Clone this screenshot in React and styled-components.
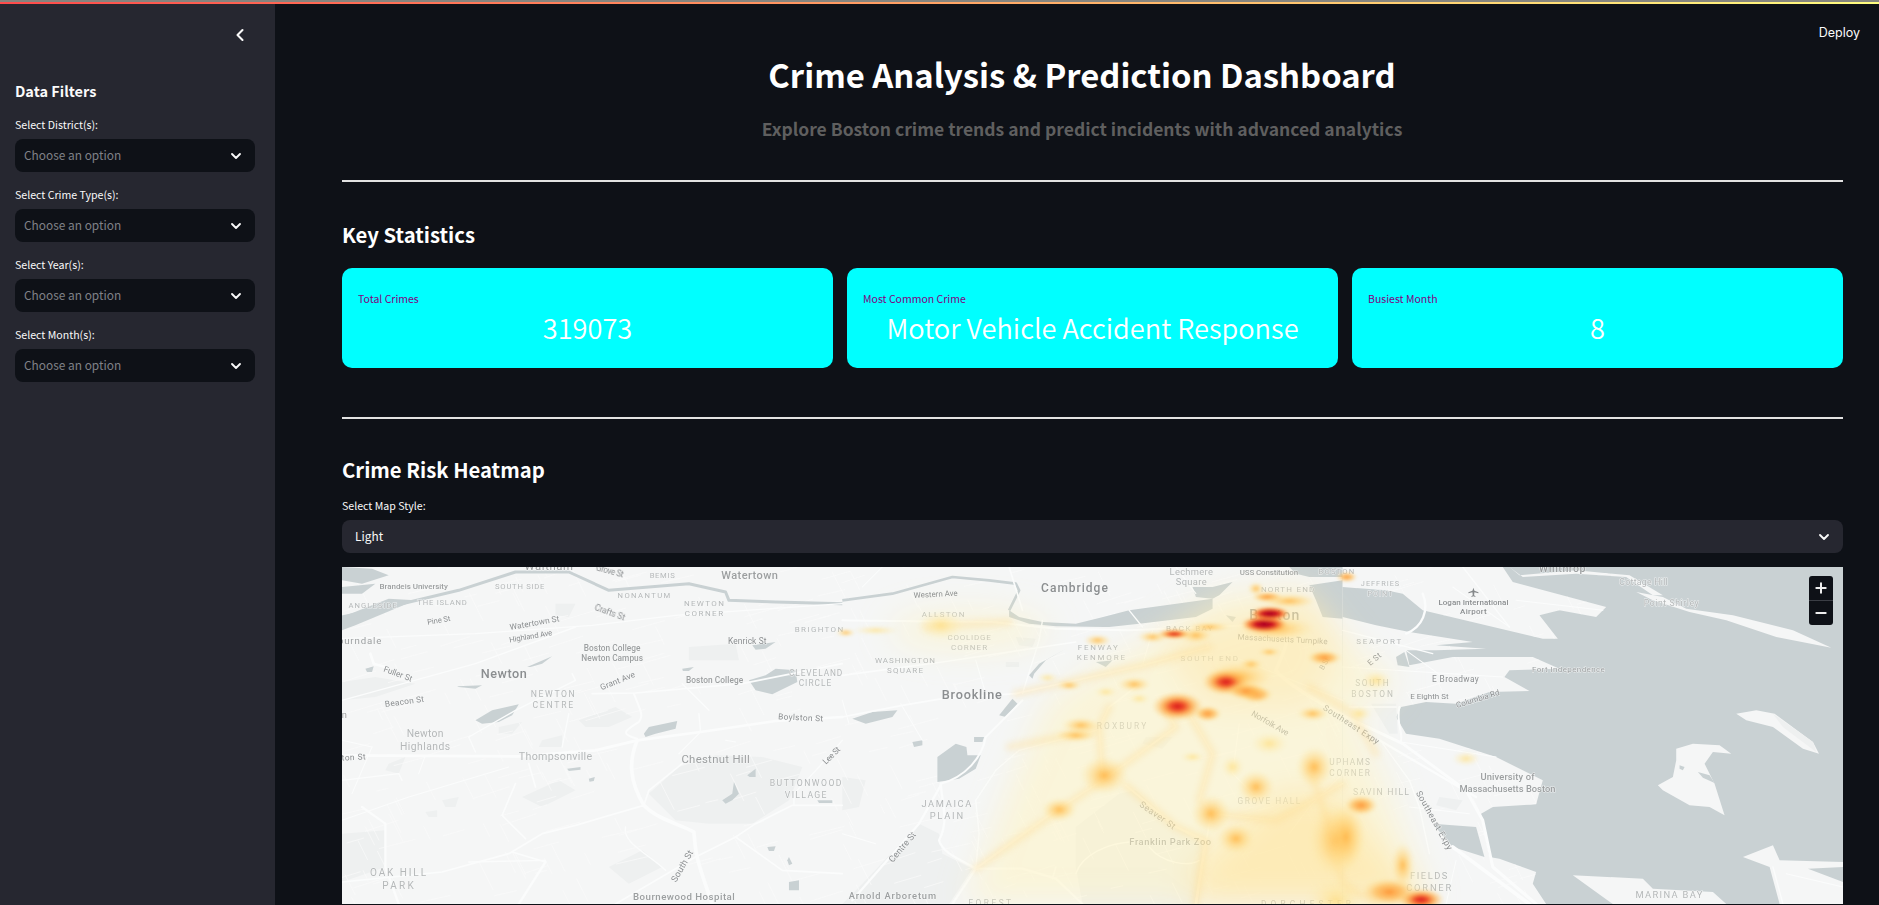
import React from "react";
import styled, { createGlobalStyle } from "styled-components";
import { ChevronDown, ChevronLeft, Plus, Minus } from "lucide-react";

const UI_FONT = `"Noto Sans CJK SC", "Noto Sans", sans-serif`;

const Global = createGlobalStyle`
  html, body { margin: 0; padding: 0; height: 100%; overflow: hidden; background: #0e1117; }
  #root { height: 100%; }
  * { box-sizing: border-box; }
`;

const Page = styled.div`
  display: flex; flex-direction: column; height: 905px; overflow: hidden;
  background: #0e1117; color: #fafafa; font-family: ${UI_FONT};
`;
const Stripe = styled.div`
  flex: none; height: 4px; border-top: 2px solid #85857f;
  background: linear-gradient(90deg, #ff4b4b, #fffd80);
`;
const Shell = styled.div`flex: 1; display: flex; min-height: 0;`;
const Sidebar = styled.aside`
  flex: none; width: 275px; background: #262730; padding: 21px 20px 0 15px;
  display: flex; flex-direction: column;
`;
const CollapseRow = styled.div`
  display: flex; justify-content: flex-end; height: 20px; margin-bottom: 36px; padding-right: 5px;
  color: #fafafa;
`;
const SideHeading = styled.h3`
  margin: 0 0 16px; font-size: 14.5px; line-height: 20px; font-weight: 700; color: #fafafa;
`;
const Field = styled.div`margin-bottom: 15px;`;
const FieldLabel = styled.label`
  display: block; font-size: 10.6px; line-height: 16px; height: 16px; margin-bottom: 6px; color: #fafafa;
`;
const SelectBox = styled.div`
  display: flex; align-items: center; justify-content: space-between;
  height: 33px; border-radius: 8px; padding: 0 11px 0 ${p => p.$pad || 9}px;
  background: ${p => p.$bg}; color: ${p => p.$fg};
  font-size: 11.9px; line-height: 20px;
`;
const SelectText = styled.span`margin-top: -2px;`;
const Main = styled.main`flex: 1; min-width: 0; display: flex; flex-direction: column;`;
const TopBar = styled.div`
  flex: none; height: 36px; padding: 21px 19px 0 0; display: flex; justify-content: flex-end;
`;
const Deploy = styled.span`
  font-family: Inter, sans-serif; font-size: 12.5px; line-height: 16px; color: #fafafa;
`;
const Content = styled.div`flex: 1; min-height: 0; padding: 0 36px 0 67px; display: flex; flex-direction: column;`;
const Hero = styled.header`padding: 12px 21px 0 0; text-align: center;`;
const Title = styled.h1`
  margin: 0; font-size: 32.8px; line-height: 44px; font-weight: 700; color: #fff;
`;
const Subtitle = styled.p`
  margin: 19px 0 0; font-size: 17.5px; line-height: 28px; font-weight: 700; color: #5f5f5f;
`;
const Rule = styled.hr`
  flex: none; width: 100%; height: 2px; margin: ${p => p.$top}px 0 0; border: 0; background: #e2e2e2;
`;
const SectionTitle = styled.h2`
  margin: ${p => p.$top}px 0 0; font-size: 20.3px; line-height: 32px; font-weight: 700; color: #fff;
`;
const Cards = styled.div`
  display: grid; grid-template-columns: repeat(3, 1fr); gap: 14px; margin-top: 18px;
`;
const Card = styled.div`
  height: 100px; border-radius: 10px; background: #00ffff; padding: 23px 16px 0;
`;
const CardLabel = styled.div`font-size: 10.5px; line-height: 16px; color: #800080;`;
const CardValue = styled.div`
  margin-top: 0; text-align: center; font-size: 27.2px; line-height: 40px; font-weight: 350; color: #fff;
`;
const MapLabelRow = styled(FieldLabel)`margin: 13px 0 6px;`;
const MapFrame = styled.div`
  position: relative; flex: none; height: 337px; margin-top: 14px; overflow: hidden; background: #f5f6f6;
`;
const MapSvg = styled.svg`display: block; width: 100%; height: 100%;`;
const ZoomStack = styled.div`
  position: absolute; top: 9px; right: 10px; width: 24px; height: 49px; border-radius: 3px;
  background: #0e1117; display: flex; flex-direction: column; color: #eee;
`;
const ZoomButton = styled.div`
  flex: 1; display: flex; align-items: center; justify-content: center;
  & + & { border-top: 1px solid #3b3e45; }
`;
const Place = styled.text`
  font-family: Roboto, "Liberation Sans", sans-serif;
  font-size: ${p => p.$s}px;
  font-weight: ${p => (p.$b ? 500 : 400)};
  fill: ${p => p.$c};
  stroke: #f6f7f7; stroke-width: 3px; paint-order: stroke; stroke-opacity: .8;
  text-anchor: middle; dominant-baseline: central;
`;

const DARK = "#8b8e90", MID = "#9c9fa0", LIGHT = "#b5b8b9";

/* [text, cx, cy, width, size, colour, rotation, bold] — map coordinates are 3x page pixels */
const labels1 = [
  ["Waltham", 620, -2, 145, 34, MID], ["Grove St", 803, 12, 85, 25, DARK, 15], ["BEMIS", 960, 27, 75, 23, LIGHT],
  ["Watertown", 1222, 27, 170, 33, MID, 0, 1], ["Brandeis University", 215, 60, 205, 24, MID, 0, 1],
  ["SOUTH SIDE", 533, 60, 148, 23, LIGHT], ["NONANTUM", 905, 85, 158, 23, LIGHT], ["ANGLESIDE", 92, 116, 145, 23, LIGHT],
  ["THE ISLAND", 300, 106, 148, 23, LIGHT], ["NEWTON", 1085, 109, 120, 24, LIGHT], ["CORNER", 1085, 139, 115, 24, LIGHT],
  ["Crafts St", 803, 136, 95, 25, DARK, 20], ["Pine St", 290, 160, 70, 23, DARK, -10], ["Watertown St", 577, 167, 150, 25, DARK, -10],
  ["Highland Ave", 566, 208, 130, 23, DARK, -10], ["BRIGHTON", 1430, 188, 145, 24, LIGHT], ["Kenrick St", 1215, 221, 115, 25, DARK],
  ["Boston College", 810, 242, 170, 25, MID, 0, 1], ["Newton Campus", 810, 274, 185, 25, MID, 0, 1], ["Auburndale", 33, 222, 170, 29, MID],
  ["Fuller St", 168, 320, 90, 25, DARK, 20], ["Newton", 485, 321, 138, 38, DARK, 0, 1], ["Grant Ave", 826, 341, 110, 25, DARK, -22],
  ["Boston College", 1117, 338, 172, 25, MID, 0, 1], ["CLEVELAND", 1420, 317, 160, 25, LIGHT], ["CIRCLE", 1418, 348, 98, 25, LIGHT],
  ["NEWTON", 632, 380, 132, 26, LIGHT], ["CENTRE", 632, 413, 122, 26, LIGHT], ["Beacon St", 187, 403, 118, 25, DARK, -8],
  ["Boylston St", 1375, 451, 135, 25, DARK, 3], ["Newton", 249, 500, 110, 31, LIGHT], ["Highlands", 249, 538, 150, 31, LIGHT],
  ["n", 7, 443, 14, 28, MID], ["ton St", 35, 570, 72, 25, DARK, -3], ["Thompsonville", 640, 570, 220, 32, LIGHT],
  ["Chestnut Hill", 1120, 575, 205, 34, MID], ["Lee St", 1467, 565, 62, 25, DARK, -45], ["BUTTONWOOD", 1390, 649, 215, 26, LIGHT],
  ["VILLAGE", 1390, 683, 125, 26, LIGHT], ["South St", 1020, 897, 105, 27, DARK, -60], ["OAK HILL", 168, 917, 168, 30, LIGHT],
  ["PARK", 168, 957, 95, 30, LIGHT], ["Bournewood Hospital", 1025, 990, 305, 29, MID, 0, 1],
];
const labels2 = [
  ["Western Ave", 280, 82, 132, 24, DARK, -3], ["ALLSTON", 302, 142, 128, 24, LIGHT], ["Cambridge", 696, 64, 200, 36, DARK, 0, 1],
  ["Lechmere", 1046, 13, 130, 28, LIGHT], ["Square", 1046, 44, 93, 28, LIGHT], ["USS Constitution", 1279, 16, 175, 24, MID, 0, 1],
  ["BOSTON", 1481, 14, 107, 23, LIGHT], ["NORTH END", 1335, 67, 160, 24, LIGHT], ["Boston", 1295, 143, 150, 42, DARK, 0, 1],
  ["BACK BAY", 1040, 184, 140, 24, LIGHT], ["Massachusetts Turnpike", 1320, 217, 270, 24, DARK, 3], ["COOLIDGE", 380, 213, 130, 24, LIGHT],
  ["CORNER", 380, 243, 108, 24, LIGHT], ["FENWAY", 766, 241, 120, 24, LIGHT], ["KENMORE", 775, 271, 145, 24, LIGHT],
  ["WASHINGTON", 188, 280, 180, 24, LIGHT], ["SQUARE", 188, 311, 108, 24, LIGHT], ["SOUTH END", 1100, 275, 172, 24, LIGHT],
  ["Brookline", 388, 384, 180, 38, DARK, 0, 1], ["ROXBURY", 837, 476, 148, 25, LIGHT], ["Norfolk Ave", 1283, 468, 125, 25, DARK, 30],
  ["JAMAICA", 312, 709, 150, 28, LIGHT], ["PLAIN", 312, 745, 100, 28, LIGHT], ["GROVE HALL", 1279, 701, 188, 25, LIGHT],
  ["Seaver St", 945, 745, 125, 27, DARK, 35], ["Franklin Park Zoo", 983, 824, 245, 28, MID, 0, 1], ["Centre St", 180, 840, 110, 27, DARK, -50],
  ["Arnold Arboretum", 150, 987, 262, 28, MID, 0, 1], ["FOREST", 442, 1008, 128, 25, LIGHT], ["DORCHESTER", 1390, 1012, 270, 25, LIGHT],
  ["UPHAMS", 1521, 584, 122, 25, LIGHT], ["CORNER", 1521, 617, 122, 25, LIGHT], ["B St", 1445, 290, 38, 22, DARK, -60],
];
const labels3 = [
  ["Winthrop", 658, 3, 140, 32, MID, 0, 1], ["JEFFRIES", 112, 51, 115, 22, LIGHT], ["POINT", 112, 79, 75, 22, LIGHT],
  ["Cottage Hill", 902, 46, 145, 26, LIGHT], ["Point Shirley", 985, 107, 165, 26, LIGHT], ["Logan International", 392, 107, 210, 24, DARK, 0, 1],
  ["Airport", 392, 134, 80, 24, DARK, 0, 1], ["SEAPORT", 108, 224, 135, 24, LIGHT], ["E St", 95, 277, 45, 24, DARK, -40],
  ["Fort Independence", 677, 307, 218, 24, MID], ["E Broadway", 338, 337, 140, 25, DARK], ["SOUTH", 88, 347, 100, 25, LIGHT],
  ["BOSTON", 88, 380, 125, 25, LIGHT], ["E Eighth St", 260, 388, 115, 24, DARK], ["Columbia Rd", 405, 396, 135, 24, DARK, -17],
  ["Southeast Expy", 26, 472, 194, 25, DARK, 33], ["University of", 494, 630, 162, 28, MID, 0, 1], ["Massachusetts Boston", 494, 666, 288, 28, MID, 0, 1],
  ["SAVIN HILL", 115, 674, 168, 26, LIGHT], ["Southeast Expy", 275, 760, 198, 26, DARK, 61], ["FIELDS", 258, 925, 112, 28, LIGHT],
  ["CORNER", 258, 962, 135, 28, LIGHT], ["MARINA BAY", 978, 983, 200, 28, LIGHT],
];

const parks = {
  p1: [
    "M920,680 L1010,600 L1120,565 L1260,570 L1380,600 L1340,700 L1230,770 L1100,770 L1000,760Z",
    "M0,345 L100,330 L220,350 L100,390 L0,400Z", "M710,460 L820,420 L870,450 L800,480 L730,480Z", "M600,520 L660,505 L660,540 L590,540Z",
    "M0,800 L130,790 L130,900 L0,945Z", "M140,590 L190,570 L170,620 L130,610Z", "M540,690 L650,640 L700,670 L600,720Z",
    "M640,110 L700,110 L680,150 L640,145Z", "M1040,240 L1180,230 L1190,280 L1040,280Z", "M470,480 L540,465 L510,500 L470,500Z",
    "M300,700 L350,690 L340,720 L310,720Z", "M250,735 L285,730 L285,750 L260,750Z", "M800,900 L900,850 L960,900 L860,950Z",
  ],
  p2: [
    "M700,900 L700,780 L830,680 L880,670 L1000,780 L1080,830 L1070,1011 L720,1011Z",
    "M60,950 L230,770 L290,800 L300,860 L390,905 L320,1011 L0,1011Z", "M0,630 L70,640 L50,720 L0,730Z",
    "M520,210 L580,215 L570,240 L530,235Z", "M910,510 L990,510 L960,545 L900,530Z", "M490,285 L530,285 L530,300 L490,300Z",
  ],
};
const water1 = [
  "M400,460 L450,430 L530,412 L510,445 L470,465 L420,470Z", "M905,500 L920,480 L1005,462 L1000,485 L940,500 L910,510Z",
  "M1220,340 L1270,325 L1300,305 L1360,310 L1365,345 L1290,382 L1240,370Z", "M555,300 L630,268 L600,290 L565,300Z",
  "M0,0 L90,5 L140,25 L60,50 L0,40Z", "M0,60 L100,50 L60,80 L0,80Z", "M1230,235 L1300,225 L1270,245 L1240,248Z",
  "M1020,305 L1055,300 L1040,312 L1022,312Z", "M70,305 L95,298 L90,315 L75,315Z", "M345,358 L420,355 L400,365 L350,360Z",
  "M1140,700 L1170,680 L1175,645 L1190,680 L1170,700 L1150,710Z", "M1215,625 L1240,605 L1240,630 L1222,630Z",
  "M1340,870 L1350,890 L1340,895 L1335,880Z", "M1340,945 L1370,940 L1370,970 L1340,970Z", "M1275,840 L1300,838 L1295,852 L1280,852Z",
  "M675,605 L715,600 L715,608 L680,612Z", "M740,635 L758,630 L755,642 L742,644Z", "M1425,700 L1470,700 L1470,708 L1430,708Z",
];
const water2 = [
  "M500,130 L530,150 L600,165 L700,170 L860,130 L1110,95 L1110,125 L1060,150 L890,170 L800,180 L640,178 L560,170 L500,150Z",
  "M1050,60 L1110,60 L1170,45 L1130,85 L1110,95 L1060,90Z", "M1400,55 L1500,40 L1500,155 L1440,150 L1420,100Z",
  "M1340,0 L1500,0 L1500,30 L1400,30 L1360,20Z", "M30,455 L90,435 L165,430 L150,450 L70,470Z",
  "M285,570 L340,530 L372,540 L375,565 L415,565 L400,605 L350,635 L285,645Z", "M470,445 L510,395 L525,410 L490,450Z",
  "M395,510 L425,510 L420,525 L395,525Z", "M210,525 L240,520 L240,535 L215,540Z", "M560,325 L590,290 L670,245 L610,280 L575,320 L570,335Z",
  "M760,285 L810,280 L790,300Z", "M1150,145 L1180,150 L1170,165Z",
];
const land3 = [
  "M0,0 L260,0 L180,80 L130,70 L0,60Z",
  "M190,40 L255,0 L480,0 L510,45 L790,120 L760,150 L650,130 L590,145 L645,215 L600,215 L240,130 L180,80Z",
  "M500,0 L530,25 L700,10 L860,25 L960,85 L930,85 L850,30 L700,20 L540,30Z",
  "M880,75 L960,90 L1030,125 L1170,145 L1350,190 L1465,242 L1300,210 L1150,160 L1040,135 L930,100Z",
  "M0,150 L100,175 L200,195 L390,225 L280,235 L430,245 L280,250 L190,250 L200,295 L330,270 L570,270 L650,305 L500,310 L485,330 L560,372 L440,375 L340,410 L250,405 L175,420 L160,450 L190,500 L290,515 L460,570 L600,640 L580,712 L450,720 L415,740 L440,870 L470,875 L580,915 L570,950 L610,1011 L0,1011Z",
  "M1180,440 L1240,430 L1295,440 L1410,525 L1428,560 L1380,545 L1290,480 L1210,460Z",
  "M1000,545 L1050,530 L1130,535 L1165,560 L1110,555 L1085,590 L1115,650 L1145,745 L1100,720 L1040,715 L960,670 L945,655 L990,630 L1000,580Z",
  "M690,925 L900,935 L930,965 L1110,975 L1150,1011 L810,1011Z",
  "M1200,870 L1290,835 L1310,880 L1500,885 L1500,900 L1395,905 L1500,945 L1500,1011 L1310,1011 L1280,900Z",
];
const water3 = ["M270,770 L400,780 L425,870 L330,840Z", "M1010,595 L1025,600 L1020,610 L1010,605Z", "M1065,615 L1100,625 L1115,648 L1080,632Z", "M160,270 L185,255 L200,300 L165,295Z"];

const riverA = "M0,150 L180,110 L350,70 L520,15 L680,15 L800,70 L1040,50 L1150,75 L1160,100 L1300,105 L1500,110";
const riverB = "M0,100 L150,80 L330,30 L440,40 L520,50 L530,70 L500,130";

const roads1 = [
  ["M0,565 L530,568 L760,550 L885,520 L1075,495 L1300,462 L1500,450", 8], ["M885,520 C860,580 860,640 905,715 C950,760 1010,770 1055,795 C1060,860 1060,870 1110,1011", 11],
  ["M905,715 L700,775 L600,800 L500,860 L300,915 L0,945", 5], ["M1500,715 L1350,715 L1240,770 L1180,810 L1060,870 L820,1011", 5],
  ["M1180,810 L1320,910 L1500,920", 5], ["M520,650 L480,745 L550,815", 5], ["M60,720 L130,770 L130,900 L170,1011", 7], ["M610,885 L530,1011", 7],
  ["M380,885 L610,880", 4], ["M510,855 L610,885", 5], ["M875,380 C895,430 905,445 890,465 C850,490 830,500 885,515", 6], ["M0,400 L400,290 L700,180", 4],
  ["M0,215 L400,200 L750,175 L1000,145 L1500,110", 4], ["M750,380 L880,378 L1200,350 L1500,290", 5], ["M700,340 L520,430 L380,510 L400,555", 4], ["M560,590 L580,660", 5],
  ["M1020,590 L920,670 L905,715", 5], ["M1070,440 L1075,495 L1010,560", 4], ["M1100,430 L1020,350", 4], ["M1500,520 L1430,600 L1355,680 L1355,715", 4],
  ["M0,640 L170,620 L180,640", 4], ["M0,760 L200,690 L500,600", 3], ["M90,540 L30,680", 3], ["M85,260 L95,290 L130,300", 8], ["M690,320 L700,340", 4],
  ["M850,780 C840,830 920,860 970,910", 4], ["M680,440 L660,540", 4], ["M0,520 L90,540", 3], ["M230,620 L250,565", 3], ["M1150,520 L1180,525", 3],
];
const roads2 = [
  ["M0,450 L180,415 L300,395 L520,380", 5], ["M520,380 L700,340 L900,295 L1100,240", 5], ["M0,325 L300,285 L700,225", 5], ["M600,160 L590,220 L540,380", 4],
  ["M0,160 L450,165 L640,185 L860,190 L1100,180 L1320,170", 6], ["M295,650 C370,630 420,570 430,510 L540,400", 6],
  ["M295,650 C300,720 320,760 290,820 C300,860 360,880 400,905 L540,905 L640,935 L720,1011", 7], ["M400,905 L330,1011", 7], ["M30,1000 L230,770 L295,655", 7],
  ["M400,905 L410,800 L400,700 L460,610 L530,550 L760,490", 4], ["M640,730 L400,905", 6], ["M780,640 L640,730", 5], ["M780,640 L770,480 L800,420 L880,360", 5],
  ["M780,640 L1000,480 L970,430", 5], ["M850,655 L1000,780 L1090,820", 6], ["M1090,820 L1060,1011", 8], ["M1105,740 L1090,830", 5], ["M1105,740 L1300,760 L1500,650", 4],
  ["M640,900 L630,935", 5], ["M700,920 C720,860 800,830 860,825", 4], ["M920,840 C960,890 1040,900 1070,880", 4], ["M1300,310 L1325,250 L1345,180", 11],
  ["M1300,310 C1330,350 1420,400 1500,445", 11], ["M1040,440 L1110,560 L1070,700", 3], ["M1190,470 L1170,620 L1230,680", 3], ["M1500,620 L1400,720 L1340,800", 3],
  ["M0,800 L100,830", 3], ["M175,410 L240,520", 3], ["M400,280 L430,380", 3], ["M0,400 L20,470", 3], ["M930,190 L900,295", 3], ["M1150,260 L1500,400", 3],
  ["M120,0 L60,60", 3], ["M860,130 L900,180", 4], ["M500,0 L540,130", 5], ["M1000,0 L1060,80", 3],
];
const roads3 = [
  ["M0,445 L180,530 L370,670 L420,760 L450,900 L580,1011", 9], ["M110,520 L400,690", 7], ["M330,840 L560,1011", 11], ["M240,80 C260,130 240,180 190,200", 7],
  ["M170,420 C160,470 180,490 175,520", 6], ["M175,525 L460,570", 3], ["M0,190 L270,260", 4], ["M20,420 L160,420", 5], ["M120,530 L200,640 L230,720 L260,860", 4],
  ["M0,300 L480,330", 3], ["M190,250 L300,330", 3], ["M330,60 L500,180", 3], ["M360,0 L500,180", 4], ["M520,100 L780,130", 3], ["M340,880 L310,1011", 3], ["M200,720 L380,740", 3],
  ["M1290,900 L1320,1011", 4], ["M1330,920 L1500,960", 3],
];

function makeMesh(width, count) {
  let seed = 7;
  const r = () => (seed = (seed * 16807) % 2147483647) / 2147483647;
  let d = "";
  for (let i = 0; i < count; i++) {
    const x = r() * width, y = r() * 1011;
    const len = 30 + r() * 90;
    if (r() < 0.6) d += `M${x.toFixed(0)},${y.toFixed(0)} l${len.toFixed(0)},${(-len * (0.22 + r() * 0.12)).toFixed(0)} `;
    else d += `M${x.toFixed(0)},${y.toFixed(0)} l${(len * 0.35).toFixed(0)},${(len * 0.7).toFixed(0)} `;
  }
  return d;
}
const meshPath = makeMesh(3000, 520);
const meshPath3 = makeMesh(800, 140);

/* heat spots in whole-map coordinates: [x, y, rx, ry, gradient] */
const P2 = 1500, P3 = 3000;
const heatSpots = [
  [P2 + 295, 175, 70, 45, "w"], [P2 + 10, 197, 30, 12, "o"], [P2 + 100, 190, 70, 14, "w"], [P2 + 615, 332, 32, 15, "w"], [P2 + 890, 395, 32, 16, "w"],
  [P2 + 1095, 440, 42, 24, "m"], [P2 + 1050, 570, 36, 16, "w"], [P2 + 1280, 530, 55, 34, "w"], [P2 + 1170, 600, 34, 34, "w"], [P2 + 790, 375, 34, 16, "w"],
  [P3 + 50, 440, 36, 24, "w"], [P3 + 370, 575, 42, 22, "w"], [P3 + 100, 340, 46, 30, "w"], [P2 + 1240, 660, 56, 50, "o"], [P3 - 20, 1000, 90, 70, "w"],
  [P2 + 785, 625, 74, 58, "o"], [P2 + 650, 728, 54, 36, "o"], [P2 + 1105, 740, 60, 58, "o"], [P2 + 1415, 600, 56, 62, "o"], [P2 + 1240, 382, 50, 26, "m"],
  [P2 + 1225, 292, 36, 18, "o"], [P2 + 1445, 272, 52, 22, "m"], [P2 + 1410, 440, 48, 22, "o"], [P2 + 875, 352, 50, 22, "o"], [P2 + 715, 475, 58, 24, "o"],
  [P2 + 700, 505, 64, 20, "o"], [P2 + 765, 220, 42, 18, "o"], [P2 + 1280, 255, 34, 13, "o"], [P2 + 1060, 205, 50, 24, "o"], [P2 + 1100, 180, 65, 15, "o"],
  [P2 + 1275, 90, 48, 16, "m"], [P2 + 1240, 65, 25, 20, "o"], [P2 + 1340, 102, 80, 22, "o"], [P2 + 680, 355, 38, 15, "o"], [P2 + 1180, 815, 56, 46, "o"],
  [P2 + 1480, 820, 80, 110, "o"], [P3 + 55, 715, 50, 30, "m"], [P3 + 140, 975, 85, 42, "m"], [P3 + 180, 895, 36, 70, "o"], [P3 + 235, 998, 70, 34, "h"],
  [P3 + 12, 30, 32, 16, "m"], [P2 + 930, 210, 46, 18, "o"], [P2 + 1300, 185, 115, 36, "o"], [P3 + 10, 810, 60, 100, "o"], [P2 + 1190, 330, 100, 46, "o"],
  [P2 + 1005, 418, 78, 44, "h"], [P2 + 1150, 345, 72, 40, "h"], [P2 + 995, 201, 52, 16, "h"], [P2 + 1210, 372, 58, 26, "m"],
  [P2 + 1265, 172, 70, 26, "x"], [P2 + 1282, 140, 60, 22, "x"],
];
/* faint bands of heat that run along the main roads */
const heatStreaks = [
  "M2280,640 L2270,480 L2300,420", "M2280,640 L2500,480 L2470,430", "M2280,640 L2150,730 L1900,905", "M2350,655 L2500,780 L2590,820 L2560,1011",
  "M2605,740 L2800,760 L3000,650", "M2540,440 L2610,560 L2570,700", "M2900,600 L2960,780 L3000,950 L3100,1011", "M2000,540 L2260,490", "M2900,360 L3030,440 L3100,560",
  "M2020,380 L2400,295 L2600,240", "M1750,180 L2000,165",
];

function LabelGroup({ items }) {
  return items.map(([t, x, y, w, s, c, rot, b], i) => (
    <Place key={i} x={x} y={y} $s={s} $c={c} $b={b} textLength={w}
      transform={rot ? `rotate(${rot} ${x} ${y})` : undefined}>{t}</Place>
  ));
}
function RoadGroup({ items }) {
  return items.map(([d, w], i) => (
    <path key={i} d={d} fill="none" stroke="#fbfcfc" strokeWidth={w} strokeLinejoin="round" strokeLinecap="round" />
  ));
}
function Shapes({ items, fill }) {
  return items.map((d, i) => <path key={i} d={d} fill={fill} />);
}

const WATER = "#c9d1d3", LAND = "#f5f6f6", PARK = "#eef0f0";

function CrimeMap() {
  return (
    <MapSvg viewBox="0 0 4500 1011" preserveAspectRatio="none">
      <defs>
        <clipPath id="land-clip">{land3.slice(0, 5).map((d, i) => <path key={i} d={d} />)}</clipPath>
        <filter id="soft" x="-10%" y="-10%" width="120%" height="120%"><feGaussianBlur stdDeviation="1.1" /></filter>
        <filter id="wash" x="-20%" y="-20%" width="140%" height="140%"><feGaussianBlur stdDeviation="48" /></filter>
        <filter id="streak" x="-20%" y="-20%" width="140%" height="140%"><feGaussianBlur stdDeviation="9" /></filter>
        <filter id="spot" x="-20%" y="-20%" width="140%" height="140%"><feGaussianBlur stdDeviation="5" /></filter>
        <radialGradient id="heat-w">
          <stop offset="0%" stopColor="#ffdc78" stopOpacity=".7" /><stop offset="100%" stopColor="#ffeeb0" stopOpacity="0" />
        </radialGradient>
        <radialGradient id="heat-o">
          <stop offset="0%" stopColor="#ffb84c" stopOpacity=".95" /><stop offset="45%" stopColor="#ffcf70" stopOpacity=".55" /><stop offset="100%" stopColor="#ffe8a0" stopOpacity="0" />
        </radialGradient>
        <radialGradient id="heat-m">
          <stop offset="0%" stopColor="#fd9638" /><stop offset="50%" stopColor="#feb64f" stopOpacity=".7" /><stop offset="100%" stopColor="#ffe08a" stopOpacity="0" />
        </radialGradient>
        <radialGradient id="heat-h">
          <stop offset="0%" stopColor="#d8171f" /><stop offset="28%" stopColor="#f0512a" /><stop offset="55%" stopColor="#fca040" stopOpacity=".8" /><stop offset="100%" stopColor="#ffd87a" stopOpacity="0" />
        </radialGradient>
        <radialGradient id="heat-x">
          <stop offset="0%" stopColor="#a30026" /><stop offset="38%" stopColor="#d01020" /><stop offset="65%" stopColor="#f7762f" stopOpacity=".9" /><stop offset="100%" stopColor="#fec55a" stopOpacity="0" />
        </radialGradient>
      </defs>

      <g filter="url(#soft)">
        <rect width="4500" height="1011" fill={LAND} />
        <Shapes items={parks.p1} fill={PARK} />
        <g transform={`translate(${P2} 0)`}><Shapes items={parks.p2} fill={PARK} /></g>
        <path d={meshPath} fill="none" stroke="#fafbfb" strokeWidth="2" />

        <path d={riverA} fill="none" stroke={WATER} strokeWidth="9" strokeLinejoin="round" />
        <path d={riverB} transform={`translate(${P2} 0)`} fill="none" stroke={WATER} strokeWidth="8" strokeLinejoin="round" />
        <path d="M0,150 L140,95 L220,100 L40,175 L0,190Z" fill={WATER} />
        <Shapes items={water1} fill={WATER} />
        <g transform={`translate(${P2} 0)`}><Shapes items={water2} fill={WATER} /></g>

        <g transform={`translate(${P3} 0)`}>
          <rect width="1500" height="1011" fill={WATER} />
          <Shapes items={land3} fill={LAND} />
          <g clipPath="url(#land-clip)"><path d={meshPath3} fill="none" stroke="#fafbfb" strokeWidth="2" /></g>
          <Shapes items={water3} fill={WATER} />
          <path d="M85,410 L160,410 L165,500 L140,500Z" fill={PARK} />
          <path d="M290,690 L360,700 L340,730 L280,715Z" fill={PARK} />
          <path d="M1290,440 L1410,525 L1420,555 L1320,480Z" fill={PARK} />
          <RoadGroup items={roads3} />
          <path d="M392,62 l3,9 l12,5 v3 l-12,-3 l-1,9 l4,3 v2 l-6,-2 l-6,2 v-2 l4,-3 l-1,-9 l-12,3 v-3 l12,-5z" fill="#85888a" />
        </g>
        <RoadGroup items={roads1} />
        <g transform={`translate(${P2} 0)`}><RoadGroup items={roads2} /></g>
        <LabelGroup items={labels1} />
        <g transform={`translate(${P2} 0)`}><LabelGroup items={labels2} /></g>
        <g transform={`translate(${P3} 0)`}><LabelGroup items={labels3} /></g>
      </g>

      <g filter="url(#wash)">
        <path d="M1870,1011 L2020,620 L2120,400 L2300,280 L2420,220 L2620,80 L2880,60 L3030,240 L3150,330 L3150,380 L3030,420 L3130,650 L3260,1011Z" fill="#fff3bd" opacity=".5" />
        <path d="M2550,920 L2800,680 L3000,680 L3090,820 L3260,1011 L2550,1011Z" fill="#ffe49a" opacity=".55" />
        <path d="M2450,220 L2900,80 L3000,240 L2900,420 L2600,420Z" fill="#ffdf90" opacity=".3" />
        <ellipse cx="1880" cy="190" rx="240" ry="60" fill="#fff3bd" opacity=".45" />
      </g>
      <g filter="url(#streak)" fill="none" stroke="#ffd98a" strokeWidth="20" opacity=".36" strokeLinecap="round">
        {heatStreaks.map((d, i) => <path key={i} d={d} />)}
      </g>
      <g filter="url(#spot)">
        {heatSpots.map(([x, y, rx, ry, g], i) => (
          <ellipse key={i} cx={x} cy={y} rx={rx} ry={ry} fill={`url(#heat-${g})`} />
        ))}
      </g>
    </MapSvg>
  );
}

const filters = ["Select District(s):", "Select Crime Type(s):", "Select Year(s):", "Select Month(s):"];
const stats = [
  ["Total Crimes", "319073"],
  ["Most Common Crime", "Motor Vehicle Accident Response"],
  ["Busiest Month", "8"],
];

export default function App() {
  return (
    <Page>
      <Global />
      <Stripe />
      <Shell>
        <Sidebar>
          <CollapseRow><ChevronLeft size={20} strokeWidth={2.5} /></CollapseRow>
          <SideHeading>Data Filters</SideHeading>
          {filters.map(f => (
            <Field key={f}>
              <FieldLabel>{f}</FieldLabel>
              <SelectBox $bg="#0e1117" $fg="#808187">
                <SelectText>Choose an option</SelectText>
                <ChevronDown size={16} strokeWidth={2.8} color="#fafafa" />
              </SelectBox>
            </Field>
          ))}
        </Sidebar>
        <Main>
          <TopBar><Deploy>Deploy</Deploy></TopBar>
          <Content>
            <Hero>
              <Title>Crime Analysis &amp; Prediction Dashboard</Title>
              <Subtitle>Explore Boston crime trends and predict incidents with advanced analytics</Subtitle>
            </Hero>
            <Rule $top={37} />
            <SectionTitle $top={36}>Key Statistics</SectionTitle>
            <Cards>
              {stats.map(([l, v]) => (
                <Card key={l}>
                  <CardLabel>{l}</CardLabel>
                  <CardValue>{v}</CardValue>
                </Card>
              ))}
            </Cards>
            <Rule $top={49} />
            <SectionTitle $top={34}>Crime Risk Heatmap</SectionTitle>
            <MapLabelRow>Select Map Style:</MapLabelRow>
            <SelectBox $bg="#262730" $fg="#fafafa" $pad={13}>
              <SelectText>Light</SelectText>
              <ChevronDown size={16} strokeWidth={2.8} color="#fafafa" />
            </SelectBox>
            <MapFrame>
              <CrimeMap />
              <ZoomStack>
                <ZoomButton><Plus size={16} strokeWidth={3} /></ZoomButton>
                <ZoomButton><Minus size={16} strokeWidth={3} /></ZoomButton>
              </ZoomStack>
            </MapFrame>
          </Content>
        </Main>
      </Shell>
    </Page>
  );
}
